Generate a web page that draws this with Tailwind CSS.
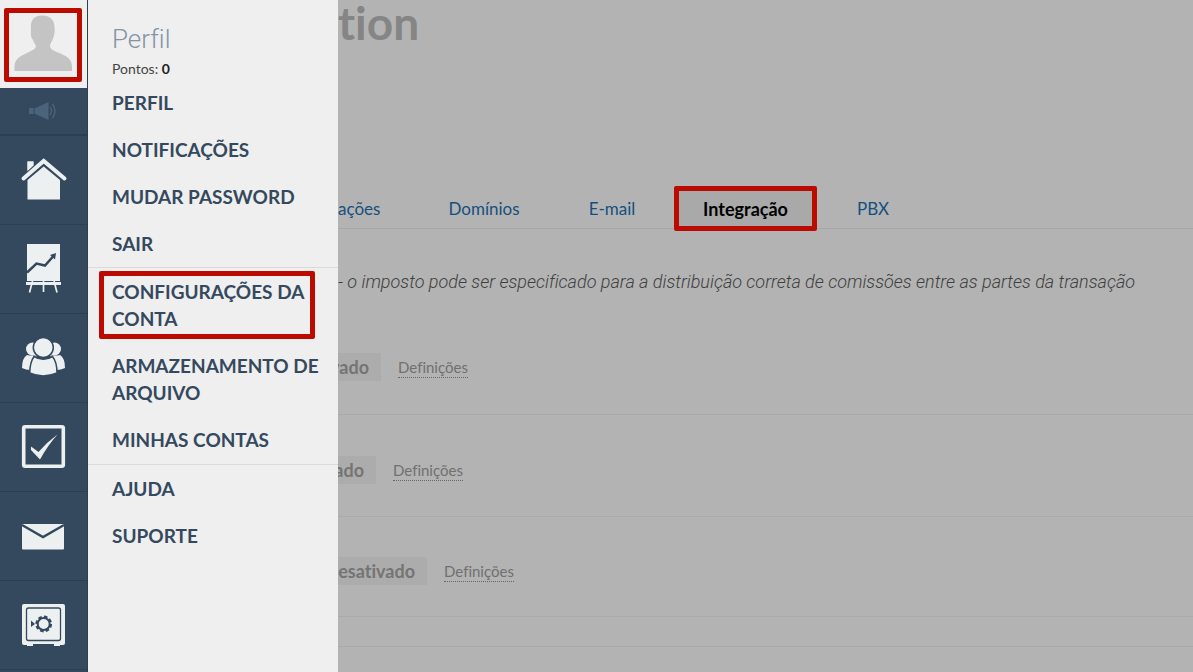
<!DOCTYPE html>
<html lang="pt">
<head>
<meta charset="utf-8">
<title>Perfil</title>
<script src="https://cdn.jsdelivr.net/npm/@tailwindcss/browser@4"></script>
</head>
<body class="flex h-screen overflow-hidden bg-[#b3b3b3] font-['Lato',sans-serif] [font-variant-ligatures:none]">
<nav class="flex w-[88px] shrink-0 flex-col border-r border-[#2c3e50] bg-[#34495e]" aria-label="Principal">
  <a href="#" aria-label="Perfil" class="relative block h-[88px] shrink-0 bg-[#efefef]">
    <svg class="h-[88px] w-[86px]" viewBox="0 0 86 88" fill="#c4c4c4"><path d="M42 15.500C50 15.500 54.500 20 54.500 27C54.500 29 55 30 54.500 33C54 35 53.500 38 52 41C51 43 50 44 50 46C50 49 53 50.500 58 52.500C66 56 72 58 72 67V71H14.500V67C14.500 58 21 56 28 52.500C32 50.500 36 49 36 46C35 44 33.500 42 33 40C31 38 30.500 34 31 30C30 21 33 15.500 42 15.500Z"/></svg>
    <span class="absolute top-2 left-1 h-[74px] w-[78px] rounded-xs border-5 border-[#bb0a00]"></span>
  </a>
  <a href="#" aria-label="Novidades" class="block h-[48px] shrink-0 border-b-2 border-[#2c3e50]">
    <svg class="h-[46px] w-[86px]" viewBox="0 0 86 46"><g fill="#4b647b"><path d="M29 20h4.500v6H29zM34.500 20.500L48.500 14v18l-14-6.500z"/></g><g fill="none" stroke="#4b647b" stroke-width="1.300"><path d="M50 19q3 3.500 0 8M52.500 16q5 7 0 14"/></g></svg>
  </a>
  <a href="#" aria-label="Início" class="block h-[89px] shrink-0 border-b border-[#2c3e50]">
    <svg class="h-[88px] w-[86px]" viewBox="0 0 86 88" fill="#ecf0f1"><path d="M27.500 25.500h6v4l-6 5.500zM43.700 30.500L60 44V63.500H27.500V44z"/><path d="M23.500 42.500L43.700 25L64.500 42.500" fill="none" stroke="#34495e" stroke-width="6.500"/><path d="M27.500 25.500h6v4l-6 5.500z"/><path d="M23.500 42.500L43.700 25L64.500 42.500" fill="none" stroke="#ecf0f1" stroke-width="4" stroke-linecap="round"/></svg>
  </a>
  <a href="#" aria-label="Relatórios" class="block h-[89px] shrink-0 border-b border-[#2c3e50]">
    <svg class="h-[88px] w-[86px]" viewBox="0 0 86 88"><path d="M27 19h33v37H27zM26 57h35v3H26z" fill="#ecf0f1"/><path d="M32.500 56L29.500 67.500M43.500 56v11M54 56l3 11.500" stroke="#ecf0f1" stroke-width="1.700"/><path d="M27 47.500L36.500 38.500L45 40.500L53 31.500" stroke="#34495e" stroke-width="2.500" fill="none"/><path d="M50 30L56 28L55 34.500z" fill="#34495e"/></svg>
  </a>
  <a href="#" aria-label="Clientes" class="block h-[89px] shrink-0 border-b border-[#2c3e50]">
    <svg class="h-[88px] w-[86px]" viewBox="0 0 86 88" fill="#ecf0f1"><circle cx="32.500" cy="35" r="6.500"/><circle cx="54.500" cy="35" r="6.500"/><path d="M27 41Q32 42 37 41L30 56Q26 56 22 54Q22 44 27 41zM60 41Q55 42 50 41L56.500 56Q61 56 65 54Q65 44 60 41z"/><g stroke="#34495e" stroke-width="1.500"><path d="M34 42.500Q43.500 48 52.500 42.500Q57 48 57 59Q43 65 29.700 59Q30 48 34 42.500z"/><circle cx="43.300" cy="33.500" r="10"/></g></svg>
  </a>
  <a href="#" aria-label="Tarefas" class="block h-[89px] shrink-0 border-b border-[#2c3e50]">
    <svg class="h-[88px] w-[86px]" viewBox="0 0 86 88"><rect x="23.700" y="23.700" width="39.600" height="39.600" rx="1.500" fill="none" stroke="#ecf0f1" stroke-width="3.600"/><path d="M31 43.500L38.500 49Q47 39 57.500 31.500Q48 42 40 56.500L31 47z" fill="#ecf0f1"/></svg>
  </a>
  <a href="#" aria-label="Correio" class="block h-[89px] shrink-0 border-b border-[#2c3e50]">
    <svg class="h-[88px] w-[86px]" viewBox="0 0 86 88"><rect x="22" y="32" width="42" height="25.500" rx="1" fill="#ecf0f1"/><path d="M22 33L43 45L64 33" fill="none" stroke="#34495e" stroke-width="2.400"/></svg>
  </a>
  <a href="#" aria-label="Finanças" class="block h-[89px] shrink-0 border-b border-[#2c3e50]">
    <svg class="h-[88px] w-[86px]" viewBox="0 0 86 88"><path d="M24 23h39q2 0 2 2v37q0 2-2 2h-3v1h-6v-2H33v2h-6v-1h-3q-2 0-2-2V25q0-2 2-2z" fill="#ecf0f1"/><rect x="26.500" y="27" width="34" height="32.500" rx="2" fill="none" stroke="#34495e" stroke-width="1.300"/><path d="M31 39.500L35 43L31 46z" fill="#34495e"/><circle cx="43.700" cy="43" r="6" fill="none" stroke="#34495e" stroke-width="2"/><circle cx="43.700" cy="43" r="7.300" fill="none" stroke="#34495e" stroke-width="2.200" stroke-dasharray="3.600 2.130"/></svg>
  </a>
</nav>
<aside class="w-[250px] shrink-0 bg-[#efefef] text-[19px] leading-[27px] font-bold text-[#34495e]">
  <header class="h-[79px] pt-[23px] pl-6">
    <h2 class="font-['Roboto',sans-serif] text-[26px] leading-8 font-light text-[#8394a5]">Perfil</h2>
    <p class="pt-1 text-[14px] leading-5 font-normal text-[#444]">Pontos: <b class="text-[#222]">0</b></p>
  </header>
  <ul class="border-b border-[#d9dbdc]">
    <li><a href="#" class="block py-[10px] pl-6">PERFIL</a></li>
    <li><a href="#" class="block py-[10px] pl-6">NOTIFICAÇÕES</a></li>
    <li><a href="#" class="block py-[10px] pl-6">MUDAR PASSWORD</a></li>
    <li><a href="#" class="block py-[10px] pl-6">SAIR</a></li>
  </ul>
  <ul class="border-b border-[#d9dbdc] pb-px">
    <li class="relative"><a href="#" class="block py-[10px] pl-6">CONFIGURAÇÕES DA<br>CONTA</a>
      <span class="pointer-events-none absolute top-[3px] left-[11px] h-[68px] w-[216px] rounded-xs border-5 border-[#bb0a00]"></span></li>
    <li><a href="#" class="block py-[10px] pl-6">ARMAZENAMENTO DE<br>ARQUIVO</a></li>
    <li><a href="#" class="block py-[10px] pl-6">MINHAS CONTAS</a></li>
  </ul>
  <ul>
    <li><a href="#" class="block py-[10px] pl-6">AJUDA</a></li>
    <li><a href="#" class="block py-[10px] pl-6">SUPORTE</a></li>
  </ul>
</aside>
<main class="min-w-0 flex-1 overflow-hidden text-[17px]">
  <h1 class="h-[190px] text-[46px] leading-[46px] font-bold text-[#858585]">tion</h1>
  <div class="flex h-[39px] border-b border-[#a7a7a7] leading-[38px] text-[#14507f]">
    <a href="#" class="w-[76px]">ações</a>
    <a href="#" class="w-[140px] text-center">Domínios</a>
    <a href="#" class="w-[116px] text-center">E-mail</a>
    <a href="#" class="relative mx-1 w-[143px] bg-[#a9a9a9] text-center text-[18px] font-bold text-black">Integração
      <span class="pointer-events-none absolute -top-1 left-0 h-[45px] w-[143px] rounded-xs border-5 border-[#bb0a00]"></span></a>
    <a href="#" class="w-[104px] text-center">PBX</a>
  </div>
  <p class="h-[124px] pt-[39px] font-['Roboto',sans-serif] text-[18px] leading-7 font-light whitespace-nowrap text-[#404040] italic">- o imposto pode ser especificado para a distribuição correta de comissões entre as partes da transação</p>
  <section class="flex h-[62px] items-start gap-[17px] border-b border-[#aaa]">
    <span class="flex h-7 w-[43px] items-center justify-end bg-[#acacac] pr-3 text-[18px] font-bold text-[#747474]">vado</span>
    <a href="#" class="mt-1 border-b border-dotted border-[#666] text-[15px] leading-5 text-[#707070]">Definições</a>
  </section>
  <section class="flex h-[102px] items-start gap-[17px] border-b border-[#aaa] pt-[41px]">
    <span class="flex h-7 w-[38px] items-center justify-end bg-[#acacac] pr-3 text-[18px] font-bold text-[#747474]">ado</span>
    <a href="#" class="mt-1 border-b border-dotted border-[#666] text-[15px] leading-5 text-[#707070]">Definições</a>
  </section>
  <section class="flex h-[100px] items-start gap-[17px] border-b border-[#aaa] pt-10">
    <span class="flex h-7 w-[89px] items-center justify-end bg-[#acacac] pr-3 text-[18px] font-bold text-[#747474]">esativado</span>
    <a href="#" class="mt-1 border-b border-dotted border-[#666] text-[15px] leading-5 text-[#707070]">Definições</a>
  </section>
  <div class="h-[30px] border-b border-[#aaa]"></div>
</main>
</body>
</html>
